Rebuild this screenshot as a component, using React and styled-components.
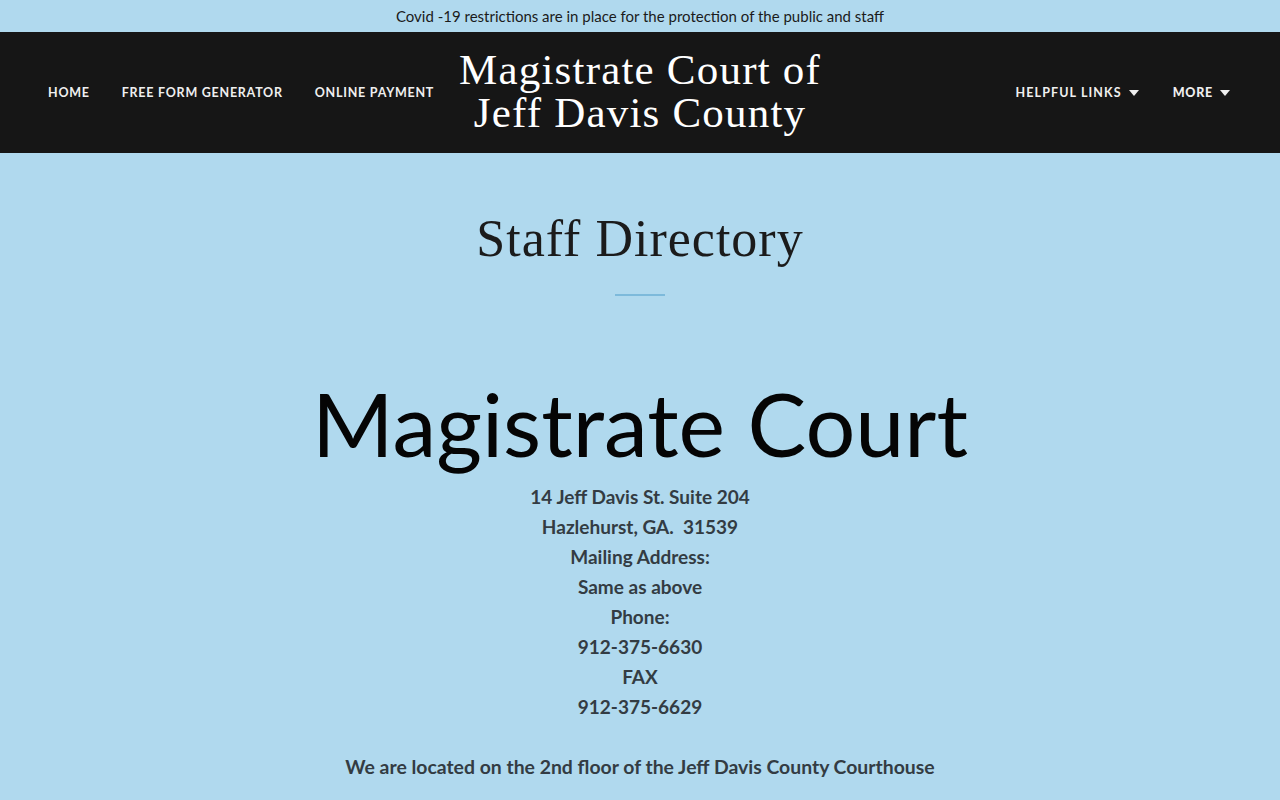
import React from "react";
import styled, { createGlobalStyle } from "styled-components";

const GlobalStyle = createGlobalStyle`
  html, body {
    margin: 0;
    padding: 0;
    background: #b0d9ee;
  }
  body {
    font-family: "Lato", "Liberation Sans", sans-serif;
  }
`;

const Banner = styled.div`
  height: 32px;
  display: flex;
  align-items: center;
  justify-content: center;
  font-size: 15px;
  color: #1b1b1b;
  background: #b0d9ee;
`;

const Header = styled.header`
  height: 121px;
  background: #161616;
  display: grid;
  grid-template-columns: 1fr auto 1fr;
  align-items: center;
  padding: 0 48px;
  box-sizing: border-box;
`;

const NavGroup = styled.nav`
  display: flex;
  align-items: center;
  gap: ${(p) => (p.right ? "34px" : "32px")};
  justify-content: ${(p) => (p.right ? "flex-end" : "flex-start")};
  padding-right: ${(p) => (p.right ? "2px" : "0")};
`;

const NavLink = styled.a`
  display: flex;
  align-items: center;
  gap: 7px;
  font-size: 12.5px;
  letter-spacing: ${(p) => (p.wide ? "1.1px" : "0.75px")};
  color: #efefef;
  font-weight: ${(p) => (p.bold ? 900 : 700)};
  text-decoration: none;
  white-space: nowrap;
`;

const Caret = styled.span`
  width: 0;
  height: 0;
  border-left: 5px solid transparent;
  border-right: 5px solid transparent;
  border-top: 6px solid #efefef;
`;

const SiteTitle = styled.h1`
  margin: 0 24px;
  font-family: "Liberation Serif", "DejaVu Serif", serif;
  font-weight: 400;
  font-size: 43px;
  line-height: 43px;
  letter-spacing: 1.2px;
  text-align: center;
  color: #ffffff;
  padding-bottom: 4px;
`;

const Main = styled.main`
  display: flex;
  flex-direction: column;
  align-items: center;
  padding-top: 56px;
`;

const PageTitle = styled.h2`
  margin: 0;
  font-family: "Liberation Serif", "DejaVu Serif", serif;
  font-weight: 400;
  font-size: 52px;
  line-height: 60px;
  letter-spacing: 1px;
  color: #1b1b1b;
`;

const Divider = styled.div`
  width: 50px;
  height: 2px;
  background: #7dbadb;
  margin-top: 25px;
`;

const BigName = styled.div`
  margin-top: 77px;
  margin-bottom: 9px;
  font-size: 88px;
  line-height: 100px;
  color: #050505;
  font-weight: 400;
`;

const Lines = styled.div`
  text-align: center;
  font-size: 19px;
  line-height: 30px;
  font-weight: 700;
  color: #333c43;
`;

const Line = styled.div`
  white-space: pre;
  margin-top: ${(p) => (p.gap ? "30px" : "0")};
  font-size: ${(p) => (p.gap ? "19.4px" : "19px")};
`;

const lines = [
  "14 Jeff Davis St. Suite 204",
  "Hazlehurst, GA.  31539",
  "Mailing Address:",
  "Same as above",
  "Phone:",
  "912-375-6630",
  "FAX",
  "912-375-6629",
];

export default function App() {
  return (
    <>
      <GlobalStyle />
      <Banner>Covid -19 restrictions are in place for the protection of the public and staff</Banner>
      <Header>
        <NavGroup>
          <NavLink href="#">HOME</NavLink>
          <NavLink href="#">FREE FORM GENERATOR</NavLink>
          <NavLink href="#">ONLINE PAYMENT</NavLink>
        </NavGroup>
        <SiteTitle>
          Magistrate Court of
          <br />
          Jeff Davis County
        </SiteTitle>
        <NavGroup right>
          <NavLink href="#" wide>
            HELPFUL LINKS <Caret />
          </NavLink>
          <NavLink href="#" bold>
            MORE <Caret />
          </NavLink>
        </NavGroup>
      </Header>
      <Main>
        <PageTitle>Staff Directory</PageTitle>
        <Divider />
        <BigName>Magistrate Court</BigName>
        <Lines>
          {lines.map((l) => (
            <Line key={l}>{l}</Line>
          ))}
          <Line gap>We are located on the 2nd floor of the Jeff Davis County Courthouse</Line>
        </Lines>
      </Main>
    </>
  );
}
